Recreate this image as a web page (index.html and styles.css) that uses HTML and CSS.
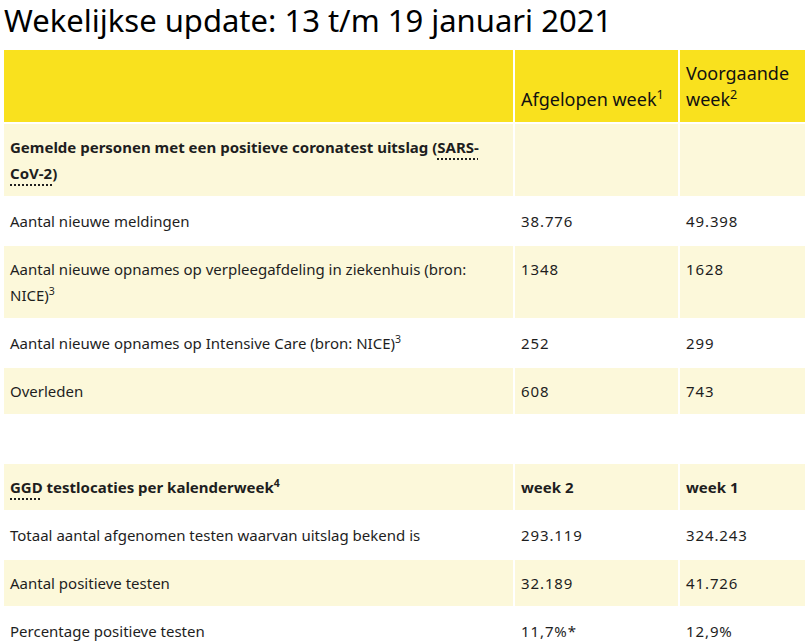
FILE: index.html
```html
<!DOCTYPE html>
<html lang="nl">
<head>
<meta charset="utf-8">
<title>Wekelijkse update</title>
<link rel="stylesheet" href="styles.css">
</head>
<body>
<h1 class="title">Wekelijkse update: 13 t/m 19 januari 2021</h1>
<table class="data">
  <colgroup>
    <col class="c1"><col class="c2"><col class="c3">
  </colgroup>
  <thead>
    <tr>
      <th></th>
      <th>Afgelopen week<sup>1</sup></th>
      <th>Voorgaande week<sup>2</sup></th>
    </tr>
  </thead>
  <tbody>
    <tr>
      <td class="strong">Gemelde personen met een positieve coronatest uitslag (<abbr title="Severe acute respiratory syndrome coronavirus 2">SARS-CoV-2</abbr>)</td>
      <td></td>
      <td></td>
    </tr>
    <tr><td>Aantal nieuwe meldingen</td><td class="num">38.776</td><td class="num">49.398</td></tr>
    <tr><td>Aantal nieuwe opnames op verpleegafdeling in ziekenhuis (bron: NICE)<sup>3</sup></td><td class="num">1348</td><td class="num">1628</td></tr>
    <tr><td>Aantal nieuwe opnames op Intensive Care (bron: NICE)<sup>3</sup></td><td class="num">252</td><td class="num">299</td></tr>
    <tr><td>Overleden</td><td class="num">608</td><td class="num">743</td></tr>
    <tr class="spacer"><td>&nbsp;</td><td>&nbsp;</td><td>&nbsp;</td></tr>
    <tr><td class="strong"><abbr title="Gemeentelijke Gezondheidsdienst">GGD</abbr> testlocaties per kalenderweek<sup>4</sup></td><td class="strong">week 2</td><td class="strong">week 1</td></tr>
    <tr><td>Totaal aantal afgenomen testen waarvan uitslag bekend is</td><td class="num">293.119</td><td class="num">324.243</td></tr>
    <tr><td>Aantal positieve testen</td><td class="num">32.189</td><td class="num">41.726</td></tr>
    <tr><td>Percentage positieve testen</td><td class="num">11,7%*</td><td class="num">12,9%</td></tr>
  </tbody>
</table>
</body>
</html>
```
FILE: styles.css
```css
html, body {
  margin: 0;
  padding: 0;
  overflow: hidden;
  background: #fff;
}
body {
  padding: 0 0 0 2px;
  font-family: "Noto Sans", "Open Sans", sans-serif;
  color: #1e1e1e;
  width: 900px;
}
.title {
  margin: 0;
  padding: 0 0 0 2px;
  font-weight: 400;
  font-size: 31px;
  line-height: 40px;
  color: #000;
  height: 48px;
}
.data {
  border-collapse: separate;
  border-spacing: 2px;
  table-layout: fixed;
  width: 850px;
  font-size: 15px;
  line-height: 26px;
}
.c1 { width: 509px; }
.c2 { width: 163px; }
.data th, .data td {
  padding: 10px 6px;
  text-align: left;
  vertical-align: top;
}
.data th {
  background: #f9e11e;
  font-weight: 400;
  font-size: 18px;
  line-height: 26px;
  vertical-align: bottom;
  color: #111;
}
.data tbody tr:nth-child(odd) td {
  background: #fcf8da;
}
.num { letter-spacing: 0.9px; }
.strong { font-weight: 700; }
abbr {
  text-decoration: underline dotted;
  text-decoration-thickness: 2px;
  text-underline-offset: 5px;
}
sup {
  font-size: 0.7em;
  line-height: 0;
  vertical-align: 0.55em;
}
```
